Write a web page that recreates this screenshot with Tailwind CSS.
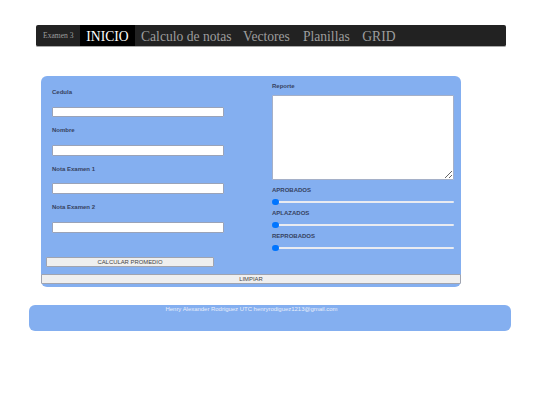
<!DOCTYPE html>
<html lang="en">
<head>
    <meta charset="UTF-8">
    <title>Examen 3</title>
    <script src="https://cdn.jsdelivr.net/npm/@tailwindcss/browser@4"></script>
</head>
<body class="bg-white font-['Liberation_Sans',sans-serif] w-[540px] h-[405px] overflow-hidden">
    <!-- Navbar -->
    <nav class="ml-9 mt-[25px] w-[470px] h-[22px] flex items-center bg-[#222222] rounded-[2px] border-b border-[#aaaaaa] font-['Liberation_Serif',serif] text-[#9d9d9d] text-[13.6px]">
        <span class="w-[44px] pl-[7px] pt-[1px] text-[7.6px] whitespace-nowrap">Examen 3</span>
        <a href="#" class="w-[55px] h-full flex items-center justify-center pt-[3px] bg-black text-white">INICIO</a>
        <a href="#" class="ml-[6px] pt-[3px]">Calculo de notas</a>
        <a href="#" class="ml-[11.5px] pt-[3px]">Vectores</a>
        <a href="#" class="ml-[13px] pt-[3px]">Planillas</a>
        <a href="#" class="ml-[12.5px] pt-[3px]">GRID</a>
    </nav>

    <!-- Formulario -->
    <form class="ml-[41px] mt-[29px] w-[420px] h-[211px] bg-[#84aff0] rounded-[6px] flex flex-col text-[#364261] text-[6px] font-bold">
        <div class="flex h-[181px]">
            <div class="w-[231px] pl-[11px] pt-[12px] flex flex-col">
                <label class="h-[19px]">Cedula</label>
                <input type="text" class="w-[172px] h-[10px] bg-white border border-[#9aa3b8] rounded-[1px]">
                <label class="mt-[9px] h-[19px]">Nombre</label>
                <input type="text" class="w-[172px] h-[10.5px] bg-white border border-[#9aa3b8] rounded-[1px]">
                <label class="mt-[9.5px] h-[18px]">Nota Examen 1</label>
                <input type="text" class="w-[172px] h-[10.5px] bg-white border border-[#9aa3b8] rounded-[1px]">
                <label class="mt-[9.5px] h-[19px]">Nota Examen 2</label>
                <input type="text" class="w-[172px] h-[10.5px] bg-white border border-[#9aa3b8] rounded-[1px]">
            </div>
            <div class="pt-[6px] w-[182px] flex flex-col">
                <label class="h-[13px]">Reporte</label>
                <textarea class="w-[182px] h-[85px] bg-white border border-[#a5b0c8] rounded-[1px]"></textarea>
                <label class="mt-[5.5px] h-[10px]">APROBADOS</label>
                <input type="range" value="0" class="w-[182px] h-[7px] mt-[3px] appearance-none bg-transparent [&::-webkit-slider-runnable-track]:h-[2.5px] [&::-webkit-slider-runnable-track]:rounded-full [&::-webkit-slider-runnable-track]:bg-[#e9ebf1] [&::-webkit-slider-thumb]:appearance-none [&::-webkit-slider-thumb]:w-[6.5px] [&::-webkit-slider-thumb]:h-[6.5px] [&::-webkit-slider-thumb]:-mt-[2px] [&::-webkit-slider-thumb]:rounded-full [&::-webkit-slider-thumb]:bg-[#0075ff]">
                <label class="mt-[3px] h-[10px]">APLAZADOS</label>
                <input type="range" value="0" class="w-[182px] h-[7px] mt-[3px] appearance-none bg-transparent [&::-webkit-slider-runnable-track]:h-[2.5px] [&::-webkit-slider-runnable-track]:rounded-full [&::-webkit-slider-runnable-track]:bg-[#e9ebf1] [&::-webkit-slider-thumb]:appearance-none [&::-webkit-slider-thumb]:w-[6.5px] [&::-webkit-slider-thumb]:h-[6.5px] [&::-webkit-slider-thumb]:-mt-[2px] [&::-webkit-slider-thumb]:rounded-full [&::-webkit-slider-thumb]:bg-[#0075ff]">
                <label class="mt-[3.5px] h-[10px]">REPROBADOS</label>
                <input type="range" value="0" class="w-[182px] h-[7px] mt-[2.5px] appearance-none bg-transparent [&::-webkit-slider-runnable-track]:h-[2.5px] [&::-webkit-slider-runnable-track]:rounded-full [&::-webkit-slider-runnable-track]:bg-[#e9ebf1] [&::-webkit-slider-thumb]:appearance-none [&::-webkit-slider-thumb]:w-[6.5px] [&::-webkit-slider-thumb]:h-[6.5px] [&::-webkit-slider-thumb]:-mt-[2px] [&::-webkit-slider-thumb]:rounded-full [&::-webkit-slider-thumb]:bg-[#0075ff]">
            </div>
        </div>
        <button type="button" class="ml-[5px] w-[168px] h-[10px] pt-[1px] bg-[#efefef] border border-[#a0a4b0] rounded-[1px] text-[5.9px] font-normal text-[#444444] leading-none">CALCULAR PROMEDIO</button>
        <button type="button" class="mt-[7px] w-[420px] h-[10px] pt-[1px] bg-[#efefef] border border-[#a0a4b0] rounded-[1px] text-[5.9px] font-normal text-[#444444] leading-none">LIMPIAR</button>
    </form>

    <!-- Pie -->
    <footer class="ml-[29px] mt-[18px] w-[482px] h-[26px] pr-[37px] bg-[#84aff0] rounded-[6px] text-center text-[5.95px] leading-[8px] text-[#e8eefa]">
        Henry Alexander Rodriguez UTC henryrodiguez1213@gmail.com
    </footer>
</body>
</html>
